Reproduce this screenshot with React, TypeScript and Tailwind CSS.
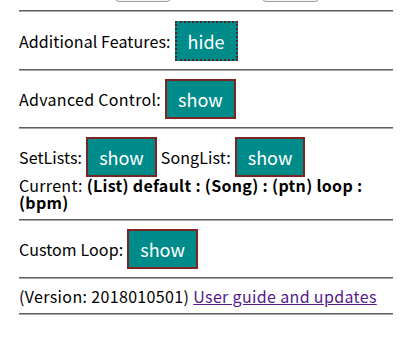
import { useState } from "react";

const font = { fontFamily: '"Noto Sans CJK JP", "Noto Sans", sans-serif' };

function Rule() {
  return <div className="h-[2px] border-t border-b border-t-[#5f5f5f] border-b-[#a8a8a8]" />;
}

function Toggle({ open, onClick, focused }: { open: boolean; onClick: () => void; focused?: boolean }) {
  return (
    <button
      onClick={onClick}
      className={
        "inline-flex h-[40px] items-center justify-center border-2 bg-[#008b8b] px-[11px] align-middle text-[18px] tracking-normal text-white " +
        (focused ? "border-dotted border-[#5a2020]" : "border-[#7a2424]")
      }
    >
      {open ? "hide" : "show"}
    </button>
  );
}

export default function App() {
  const [features, setFeatures] = useState(true);
  const [advanced, setAdvanced] = useState(false);
  const [setLists, setSetLists] = useState(false);
  const [songList, setSongList] = useState(false);
  const [loop, setLoop] = useState(false);

  return (
    <div className="min-h-screen bg-white px-[19px] text-[16px] tracking-[0.1px] text-black" style={font}>
      <div className="relative h-[10px] overflow-hidden">
        <div className="absolute bottom-[8px] left-[96px] h-[30px] w-[56px] rounded-[4px] border border-[#a0a0a0] bg-[#f4f4f4]" />
        <div className="absolute bottom-[8px] left-[243px] h-[30px] w-[57px] rounded-[4px] border border-[#a0a0a0] bg-[#f4f4f4]" />
      </div>
      <Rule />

      <div className="flex items-center gap-[4px] pt-[9px] pb-[8px]">
        <span>Additional Features:</span>
        <Toggle open={features} onClick={() => setFeatures(!features)} focused />
      </div>
      <Rule />

      <div className="flex items-center gap-[4px] pt-[8px] pb-[8px]">
        <span className="tracking-[0.3px]">Advanced Control:</span>
        <Toggle open={advanced} onClick={() => setAdvanced(!advanced)} />
      </div>
      <Rule />

      <div className="pt-[8px] pb-[8px]">
        <div className="flex items-center gap-[4px]">
          <span>SetLists:</span>
          <Toggle open={setLists} onClick={() => setSetLists(!setLists)} />
          <span>SongList:</span>
          <Toggle open={songList} onClick={() => setSongList(!songList)} />
        </div>
        <div className="leading-[17px] tracking-[0.3px]">
          Current: <b>(List) default : (Song) : (ptn) loop : (bpm)</b>
        </div>
      </div>
      <Rule />

      <div className="flex items-center gap-[4px] pt-[8px] pb-[8px]">
        <span>Custom Loop:</span>
        <Toggle open={loop} onClick={() => setLoop(!loop)} />
      </div>
      <Rule />

      <div className="py-[8px] leading-[18px] tracking-[0.35px]">
        (Version: 2018010501){" "}
        <a href="#" className="text-[#551a8b] underline">User guide and updates</a>
      </div>
      <Rule />
    </div>
  );
}
